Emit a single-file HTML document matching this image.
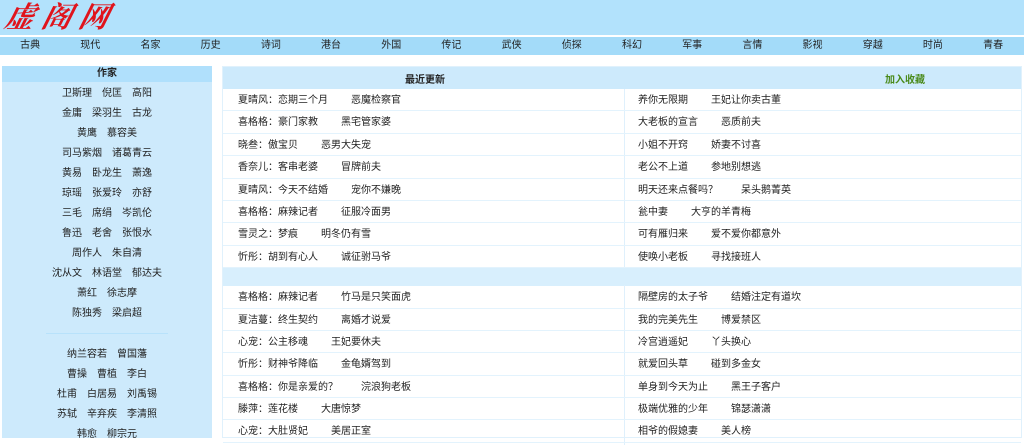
<!DOCTYPE html>
<html><head><meta charset="utf-8"><style>
*{margin:0;padding:0;box-sizing:border-box}
body{width:1024px;height:438px;overflow:hidden;background:#fff;font-family:"Liberation Sans","Noto Sans CJK SC",sans-serif;font-size:10px;color:#222}
#hd{position:absolute;left:0;top:0;width:1024px;height:35px;background:#b2e2fc}
#logo{position:absolute;left:6px;top:0px;font-family:"Noto Serif CJK SC",serif;font-style:italic;font-weight:bold;font-size:29px;line-height:32px;color:#e0141c;letter-spacing:8px;transform:skewX(-14deg)}
#nav{position:absolute;left:0;top:37px;width:1024px;height:18px;background:#a3dbf9;display:flex}
#nav span{width:60.2px;text-align:center;line-height:18px;font-size:10px;color:#222}
#side{position:absolute;left:2px;top:66px;width:210px;height:372px;background:#cdeafc;text-align:center;overflow:hidden}
#side .t{height:16px;line-height:16px;background:#b0e0fc;font-weight:bold;font-size:10px}
#side p{height:20px;line-height:24px}
#side p i{font-style:normal;margin:0 5px}
#side hr{border:0;border-top:1px solid #b8e2fb;width:122px;margin:11px auto 9px}
#main{position:absolute;left:222px;top:66px;width:800px;height:372px;border:1px solid #e0f1fc}
.h{height:22px;background:#cdeafc;position:relative;font-weight:bold;font-size:10px}
.h span{position:absolute;top:4px}
.r{height:22.4px;border-bottom:1.5px solid #e3f3fd;position:relative;line-height:23px}
.r .a{position:absolute;left:15px}
.r .b{position:absolute;left:415px}
.r i{font-style:normal;margin-left:23px}
.v{position:absolute;left:401px;top:22px;width:1px;height:178px;background:#dff0fc}
.v2{position:absolute;left:401px;top:218px;width:1px;height:160px;background:#dff0fc}
.s{height:18px;background:#d8effd}
</style></head><body>
<div id="hd"><div id="logo">虚阁网</div></div>
<div id="nav"><span>古典</span><span>现代</span><span>名家</span><span>历史</span><span>诗词</span><span>港台</span><span>外国</span><span>传记</span><span>武侠</span><span>侦探</span><span>科幻</span><span>军事</span><span>言情</span><span>影视</span><span>穿越</span><span>时尚</span><span>青春</span></div>
<div id="side"><div class="t">作家</div>
<p><i>卫斯理</i><i>倪匡</i><i>高阳</i></p><p><i>金庸</i><i>梁羽生</i><i>古龙</i></p><p><i>黄鹰</i><i>慕容美</i></p><p><i>司马紫烟</i><i>诸葛青云</i></p><p><i>黄易</i><i>卧龙生</i><i>萧逸</i></p><p><i>琼瑶</i><i>张爱玲</i><i>亦舒</i></p><p><i>三毛</i><i>席绢</i><i>岑凯伦</i></p><p><i>鲁迅</i><i>老舍</i><i>张恨水</i></p><p><i>周作人</i><i>朱自清</i></p><p><i>沈从文</i><i>林语堂</i><i>郁达夫</i></p><p><i>萧红</i><i>徐志摩</i></p><p><i>陈独秀</i><i>梁启超</i></p>
<hr>
<p><i>纳兰容若</i><i>曾国藩</i></p><p><i>曹操</i><i>曹植</i><i>李白</i></p><p><i>杜甫</i><i>白居易</i><i>刘禹锡</i></p><p><i>苏轼</i><i>辛弃疾</i><i>李清照</i></p><p><i>韩愈</i><i>柳宗元</i></p></div>
<div id="main">
<div class="h"><span style="left:182px">最近更新</span><span style="left:662px;color:#4a8a1a">加入收藏</span></div>
<div class="v"></div><div class="v2"></div>
<div class="r"><span class="a">夏晴风：恋期三个月<i>恶魔检察官</i></span><span class="b">养你无限期<i>王妃让你卖古董</i></span></div>
<div class="r"><span class="a">喜格格：豪门家教<i>黑宅管家婆</i></span><span class="b">大老板的宣言<i>恶质前夫</i></span></div>
<div class="r"><span class="a">晓叁：傲宝贝<i>恶男大失宠</i></span><span class="b">小姐不开窍<i>娇妻不讨喜</i></span></div>
<div class="r"><span class="a">香奈儿：客串老婆<i>冒牌前夫</i></span><span class="b">老公不上道<i>参地别想逃</i></span></div>
<div class="r"><span class="a">夏晴风：今天不结婚<i>宠你不嫌晚</i></span><span class="b">明天还来点餐吗？<i>呆头鹅菁英</i></span></div>
<div class="r"><span class="a">喜格格：麻辣记者<i>征服冷面男</i></span><span class="b">瓮中妻<i>大亨的羊青梅</i></span></div>
<div class="r"><span class="a">雪灵之：梦痕<i>明冬仍有雪</i></span><span class="b">可有雁归来<i>爱不爱你都意外</i></span></div>
<div class="r"><span class="a">忻彤：胡到有心人<i>诚征驸马爷</i></span><span class="b">使唤小老板<i>寻找接班人</i></span></div>
<div class="s"></div>
<div class="r"><span class="a">喜格格：麻辣记者<i>竹马是只笑面虎</i></span><span class="b">隔壁房的太子爷<i>结婚注定有道坎</i></span></div>
<div class="r"><span class="a">夏洁蔓：终生契约<i>离婚才说爱</i></span><span class="b">我的完美先生<i>博爱禁区</i></span></div>
<div class="r"><span class="a">心宠：公主移魂<i>王妃要休夫</i></span><span class="b">冷宫逍遥妃<i>丫头换心</i></span></div>
<div class="r"><span class="a">忻彤：财神爷降临<i>金龟婿驾到</i></span><span class="b">就爱回头草<i>碰到多金女</i></span></div>
<div class="r"><span class="a">喜格格：你是亲爱的？<i>浣浪狗老板</i></span><span class="b">单身到今天为止<i>黑王子客户</i></span></div>
<div class="r"><span class="a">滕萍：莲花楼<i>大唐惊梦</i></span><span class="b">极端优雅的少年<i>锦瑟潇潇</i></span></div>
<div class="r"><span class="a">心宠：大肚贤妃<i>美居正室</i></span><span class="b">相爷的假媳妻<i>美人榜</i></span></div>
</div>
</body></html>
